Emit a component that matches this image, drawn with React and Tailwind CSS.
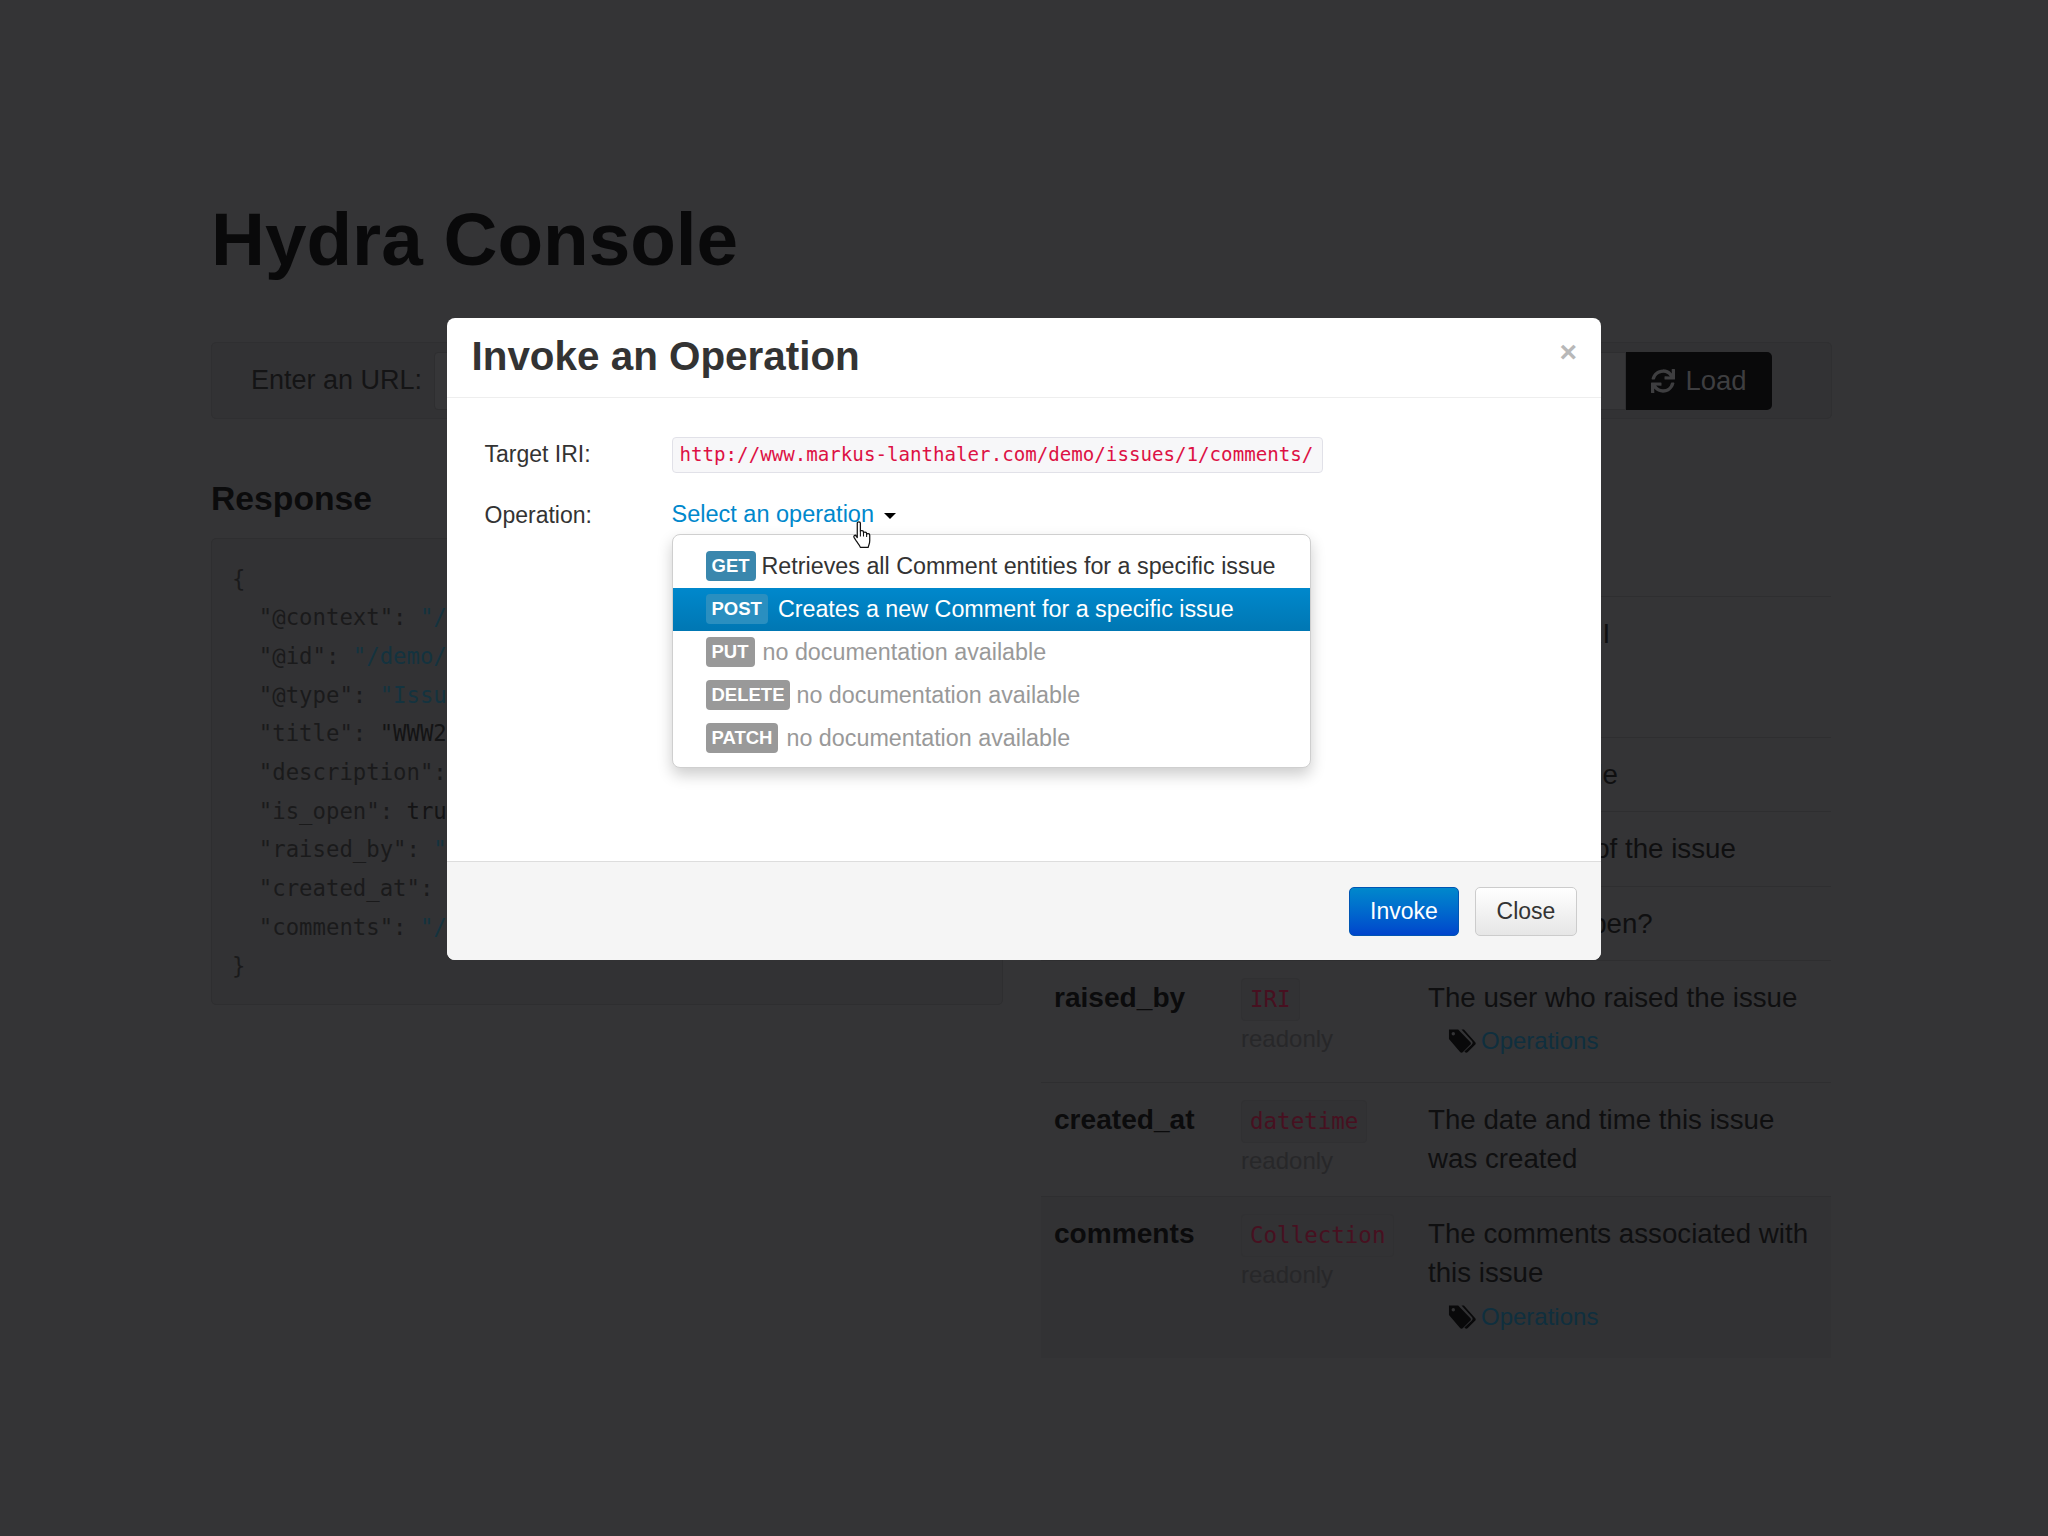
import React from "react";
import { FaSync } from "react-icons/fa";

const MONO = "font-['DejaVu_Sans_Mono',monospace]";

function Tags({ hole }) {
  return (
    <svg viewBox="0 0 29 26" className="h-[26px] w-[28px]">
      <path d="M1 1h9.5L23 14c1 1 1 2 0 3l-7.5 7.5c-1 1-2 1-3 0L1 11Z" fill="#09090a" />
      <circle cx="5.5" cy="5.5" r="1.8" fill={hole} />
      <path d="M14 1h2.5L28 14c1 1 1 2 0 3l-7.5 7.5c-1 1-2 1-3 0l-.5-.5L24.5 17c1.4-1.4 1.4-3 0-4.3Z" fill="#09090a" />
    </svg>
  );
}

function Ops({ extra, hole }) {
  return (
    <div className={`ml-[20px] flex items-center gap-[5px] text-[24px] leading-[39px] text-[#0f2f3e] ${extra}`}>
      <Tags hole={hole} />
      <span>Operations</span>
    </div>
  );
}

function Row({ name, type, desc, ops, h, striped, ro }) {
  return (
    <div className={`grid grid-cols-[187px_187px_1fr] overflow-hidden border-t border-[#2e2e30] pl-[13px] pr-[10px] pt-[17px] ${h} ${striped ? "bg-[#323234]" : ""}`}>
      <div className="text-[28.1px] font-bold leading-[39px] text-[#0b0b0c]">{name}</div>
      <div className="flex flex-col items-start">
        <code className={`${MONO} rounded-[4px] border border-[#303032] bg-[#323234] px-[8px] text-[22.5px] leading-[41px] text-[#471020]`}>{type}</code>
        {ro && <span className="mt-[1px] text-[24px] leading-[33px] text-[#272729]">readonly</span>}
      </div>
      <div className="text-[27.7px] leading-[39px] text-[#0f0f10]">
        {desc}
        {ops && <Ops extra={striped ? "mt-[5px]" : "mt-[4px]"} hole={striped ? "#323234" : "#343436"} />}
      </div>
    </div>
  );
}

function Item({ label, text, color, labelBg, selected, gap }) {
  return (
    <div className={`flex h-[43px] items-center pl-[33px] text-[23.3px] ${color} ${selected ? "bg-gradient-to-b from-[#0088cc] to-[#0077b3]" : ""}`}>
      <span className={`rounded-[4px] px-[6px] text-[18.5px] font-bold leading-[30px] text-white ${gap} ${labelBg}`}>{label}</span>
      {text}
    </div>
  );
}

function Hand() {
  return (
    <svg viewBox="0 0 20 27" className="absolute left-[181px] top-[24px] z-10 h-[28px] w-[21px]">
      <path
        d="M4 2C4 .6 7 .6 7 2V10C7 9 10 9 10 10.5V11.5C10 10.3 13 10.3 13 12V13C13 11.8 16 11.8 16 13.5V19C16 22 15 23 14.5 25.5H7C6.5 23.5 5 22 3.5 20L1 16C0 14 2 13 3 14.5L4 16Z"
        fill="#fff"
        stroke="#111"
        strokeWidth="1.2"
        strokeLinejoin="round"
      />
      <path d="M7 10V15M10 11V15M13 12.5V15.5" fill="none" stroke="#111" strokeWidth="1" />
    </svg>
  );
}

const json = [
  ["{", "", ""],
  ['  "@context": ', '"/demo/contexts/Issue.jsonld"', "t", ","],
  ['  "@id": ', '"/demo/issues/1"', "t", ","],
  ['  "@type": ', '"Issue"', "t", ","],
  ['  "title": ', '"WWW2014 demo"', "d", ","],
  ['  "description": ', '"A demo issue"', "d", ","],
  ['  "is_open": ', "true", "d", ","],
  ['  "raised_by": ', '"/demo/users/1"', "t", ","],
  ['  "created_at": ', '"2014-04-07"', "d", ","],
  ['  "comments": ', '"/demo/issues/1/comments/"', "t", ""],
  ["}", "", ""],
];

export default function App() {
  return (
    <div className="relative h-[1536px] w-[2048px] overflow-hidden bg-[#343436] font-['Liberation_Sans',Arial,sans-serif]">
      <div className="flex w-[1832px] flex-col pl-[211px] pt-[198px]">
        <h1 className="text-[74.7px] font-bold leading-[82px] text-[#09090a]">Hydra Console</h1>

        <div className="mt-[62px] flex h-[77px] items-center rounded-[5px] border border-[#2f2f31] bg-[#323234] pl-[39px] pr-[59px]">
          <span className="w-[183px] shrink-0 text-[27px] text-[#141415]">Enter an URL:</span>
          <div className="h-[58px] flex-1 rounded-l-[4px] border border-[#2e2e30] bg-[#363638]" />
          <div className="flex h-[58px] w-[146px] items-center justify-center gap-[10px] rounded-r-[5px] bg-[#09090a] text-[27.5px] text-[#3e3e40]">
            <FaSync className="h-[24px] w-[24px]" />
            <span>Load</span>
          </div>
        </div>

        <div className="grid grid-cols-[792px_790px] gap-[38px]">
          <div className="mt-[59px]">
            <h2 className="text-[33.7px] font-bold leading-[40px] text-[#0b0b0c]">Response</h2>
            <pre className={`${MONO} mt-[20px] rounded-[5px] border border-[#2e2e30] bg-[#323234] px-[20px] pb-[18.5px] pt-[20.5px] text-[22.3px] leading-[38.7px] text-[#1a1a1b]`}>
              {json.map((l, i) => (
                <div key={i}>
                  {l[0]}
                  <span className={l[2] === "t" ? "text-[#14333f]" : "text-[#141415]"}>{l[1]}</span>
                  {l[3]}
                </div>
              ))}
            </pre>
          </div>

          <div className="mt-[177px]">
            <Row h="h-[141px]" name="id" type="IRI" desc="The issue's IRI" />
            <Row h="h-[74px]" name="title" type="string" desc="The issue's title" />
            <Row h="h-[75px]" name="description" type="string" desc="A description of the issue" />
            <Row h="h-[74px]" name="is_open" type="boolean" desc="Is the issue open?" />
            <Row h="h-[122px]" ro name="raised_by" type="IRI" desc="The user who raised the issue" ops />
            <Row h="h-[114px]" ro name="created_at" type="datetime" desc="The date and time this issue was created" />
            <Row h="h-[162px]" ro striped name="comments" type="Collection" desc="The comments associated with this issue" ops />
          </div>
        </div>
      </div>

      <div className="absolute left-[447px] top-[318px] flex h-[642px] w-[1154px] flex-col overflow-hidden rounded-[8px] bg-white text-[23px] text-[#333]">
        <div className="flex h-[80px] shrink-0 items-start justify-between border-b border-[#eeeeee] pl-[24.5px] pr-[24px]">
          <h3 className="text-[40.4px] font-bold leading-[76px] text-[#333]">Invoke an Operation</h3>
          <span className="mt-[19px] text-[30px] font-bold leading-none text-[#b8b8b8]">×</span>
        </div>

        <div className="flex-1 pl-[37.5px] pt-[39px]">
          <div className="flex items-center">
            <span className="mb-[2px] w-[187px]">Target IRI:</span>
            <code className={`${MONO} flex h-[36px] w-[651px] items-center rounded-[4px] border border-[#e1e1e8] bg-[#f7f7f9] px-[7px] text-[19.15px] text-[#dd1144]`}>
              http://www.markus-lanthaler.com/demo/issues/1/comments/
            </code>
          </div>
          <div className="mt-[23px] flex items-center">
            <span className="w-[187px]">Operation:</span>
            <div className="relative flex h-[37px] items-center text-[23.5px] text-[#0088cc]">
              Select an operation
              <span className="ml-[10px] mt-[1px] h-0 w-0 border-x-[6px] border-t-[6px] border-x-transparent border-t-black" />
              <div className="absolute left-0 top-[37px] w-[639px] rounded-[8px] border border-[#cfcfcf] bg-white pb-[7px] pt-[10px] shadow-[0_7px_15px_rgba(0,0,0,0.2)]">
                <Item gap="mr-[6px]" label="GET" text="Retrieves all Comment entities for a specific issue" color="text-[#333]" labelBg="bg-[#3a87ad]" />
                <Item gap="mr-[10px]" selected label="POST" text="Creates a new Comment for a specific issue" color="text-white" labelBg="bg-[#2a8fc0]" />
                <Item gap="mr-[8px]" label="PUT" text="no documentation available" color="text-[#999]" labelBg="bg-[#999]" />
                <Item gap="mr-[6px]" label="DELETE" text="no documentation available" color="text-[#999]" labelBg="bg-[#999]" />
                <Item gap="mr-[8px]" label="PATCH" text="no documentation available" color="text-[#999]" labelBg="bg-[#999]" />
              </div>
              <Hand />
            </div>
          </div>
        </div>

        <div className="flex h-[99px] shrink-0 items-center justify-end gap-[16px] border-t border-[#dddddd] bg-[#f5f5f5] pr-[24px]">
          <button className="h-[49px] w-[110px] rounded-[5px] border border-[#0055b3] bg-gradient-to-b from-[#0088cc] to-[#0044cc] text-[23px] text-white">Invoke</button>
          <button className="h-[49px] w-[102px] rounded-[5px] border border-[#cccccc] bg-gradient-to-b from-white to-[#e6e6e6] text-[23px] text-[#333]">Close</button>
        </div>
      </div>
    </div>
  );
}
